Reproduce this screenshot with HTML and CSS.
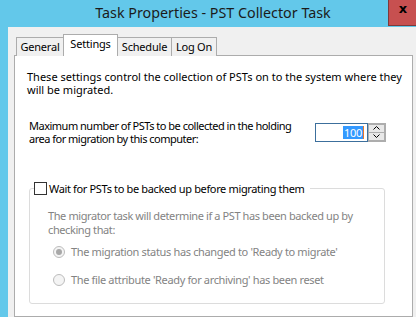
FILE: index.html
```html
<!doctype html>
<html lang="en">
<head>
	<meta charset="UTF-8" />
	<title>Task Properties - PST Collector Task</title>
	<link rel="stylesheet" href="styles.css">
</head>
<body>
	<div class="window">
		<!--标题栏-->
		<div class="titlebar">
			<div class="title">Task Properties - PST Collector Task</div>
			<div class="closebtn">x</div>
		</div>

		<div class="client">
			<!--选项卡-->
			<ul class="tabs">
				<li>General</li>
				<li class="active">Settings</li>
				<li>Schedule</li>
				<li>Log On</li>
			</ul>

			<div class="panel">
				<p class="intro">These settings control the collection of PSTs on to the system where they<br>will be migrated.</p>

				<div class="maxrow">
					<p class="maxlabel">Maximum number of PSTs to be collected in the holding<br>area for migration by this computer:</p>
					<div class="spin">
						<div class="spinbox"><span class="sel">100</span><span class="caret"></span></div>
						<div class="spinbtns">
							<div class="spinbtn">
								<svg width="7" height="4" viewBox="0 0 7 4"><path d="M0.5 3.5 L3.5 0.5 L6.5 3.5" fill="none" stroke="#000" stroke-width="1"/></svg>
							</div>
							<div class="spinbtn">
								<svg width="7" height="4" viewBox="0 0 7 4"><path d="M0.5 0.5 L3.5 3.5 L6.5 0.5" fill="none" stroke="#000" stroke-width="1"/></svg>
							</div>
						</div>
					</div>
				</div>

				<!--分组框-->
				<fieldset class="group">
					<legend><span class="check"></span>Wait for PSTs to be backed up before migrating them</legend>
					<div class="groupbody">
						<p class="desc">The migrator task will determine if a PST has been backed up by<br>checking that:</p>
						<div class="radio first"><span class="dot on"></span>The migration status has changed to 'Ready to migrate'</div>
						<div class="radio"><span class="dot"></span>The file attribute 'Ready for archiving' has been reset</div>
					</div>
				</fieldset>
			</div>
		</div>
	</div>
</body>
</html>
```

FILE: styles.css
```css
*{
	padding: 0;
	margin: 0;
	box-sizing: border-box;
}
ul{
	list-style: none;
}
body{
	width: 416px;
	height: 317px;
	overflow: hidden;
	background-color: #63c8ea;
	font-family: "Noto Sans", "Liberation Sans", sans-serif;
	font-size: 11px;
	color: #000;
	white-space: nowrap;
}

/*窗口*/
.window{
	height: 317px;
	display: flex;
	flex-direction: column;
}
.titlebar{
	height: 27px;
	display: flex;
	align-items: flex-start;
}
.title{
	flex: 1;
	text-align: center;
	font-size: 14.3px;
	line-height: 26px;
	color: #1b1b1b;
	padding-left: 38px;
}
.closebtn{
	width: 29px;
	height: 26px;
	margin-right: -1px;
	background-color: #c75050;
	border-left: 1px solid #7d3a3a;
	border-bottom: 1px solid #7d3a3a;
	font-family: "DejaVu Sans", sans-serif;
	font-weight: bold;
	font-size: 13px;
	line-height: 18px;
	text-align: center;
	color: #000;
}
.client{
	flex: 1;
	margin-left: 8px;
	background-color: #f0f0f0;
	padding: 7px 3px 0 6px;
	display: flex;
	flex-direction: column;
}

/*选项卡*/
.tabs{
	display: flex;
	align-items: flex-end;
	height: 22px;
	margin-left: 2px;
	position: relative;
	z-index: 1;
	margin-bottom: -1px;
}
.tabs li{
	height: 19px;
	line-height: 18px;
	text-align: center;
	letter-spacing: -0.2px;
	background-color: #f0f0f0;
	border: 1px solid #acacac;
	border-bottom: none;
	margin-left: -1px;
}
.tabs li:nth-child(1){
	width: 48px;
	margin-left: 0;
}
.tabs li:nth-child(2){
	width: 55px;
}
.tabs li:nth-child(3){
	width: 55px;
}
.tabs li:nth-child(4){
	width: 46px;
}
.tabs li.active{
	height: 22px;
	background-color: #fff;
	line-height: 18px;
}

.panel{
	flex: 1;
	background-color: #fff;
	border: 1px solid #acacac;
	padding: 14px 0 0 12px;
}
.intro{
	line-height: 13px;
}

.maxrow{
	display: flex;
	align-items: center;
	margin-top: 23px;
	padding-left: 2px;
}
.maxlabel{
	width: 286px;
	line-height: 13px;
	letter-spacing: -0.5px;
}
.spin{
	display: flex;
}
.spinbox{
	width: 53px;
	height: 19px;
	border: 1px solid #3c6f9c;
	display: flex;
	justify-content: flex-end;
	align-items: center;
	padding-right: 3px;
}
.sel{
	background-color: #3399ff;
	color: #fff;
	line-height: 13px;
	padding: 0 1px;
	letter-spacing: -0.3px;
}
.caret{
	width: 1px;
	height: 13px;
	background-color: #e8782a;
}
.spinbtns{
	width: 18px;
	height: 19px;
	border: 1px solid #adadad;
	border-left: none;
	display: flex;
	flex-direction: column;
	background-color: #adadad;
	gap: 1px;
	padding: 1px;
}
.spinbtn{
	flex: 1;
	background-color: #e8e8e8;
	display: flex;
	align-items: center;
	justify-content: center;
}
.spinbtn svg{
	display: block;
}

/*分组框*/
.group{
	width: 356px;
	margin: 37px 0 0 2px;
	border: 1px solid #dcdcdc;
	border-radius: 3px;
	padding: 0 0 17px 4px;
	letter-spacing: -0.35px;
}
.group legend{
	padding: 0 6px 0 0;
	display: flex;
	align-items: center;
	line-height: 13px;
}
.check{
	width: 13px;
	height: 13px;
	border: 1px solid #333;
	background-color: #fff;
	margin-right: 2px;
}
.groupbody{
	padding-left: 14px;
}
.desc{
	color: #838383;
	line-height: 14px;
	margin-top: 14px;
	letter-spacing: -0.4px;
}
.radio{
	display: flex;
	align-items: center;
	color: #838383;
	line-height: 13px;
	margin-top: 15px;
	padding-left: 5px;
}
.radio.first{
	margin-top: 8px;
}
.dot{
	width: 12px;
	height: 12px;
	border: 1px solid #bcbcbc;
	border-radius: 50%;
	background-color: #f4f4f4;
	margin-right: 6px;
	display: flex;
	align-items: center;
	justify-content: center;
}
.dot.on::after{
	content: "";
	width: 6px;
	height: 6px;
	border-radius: 50%;
	background-color: #a8a8a8;
}
```
